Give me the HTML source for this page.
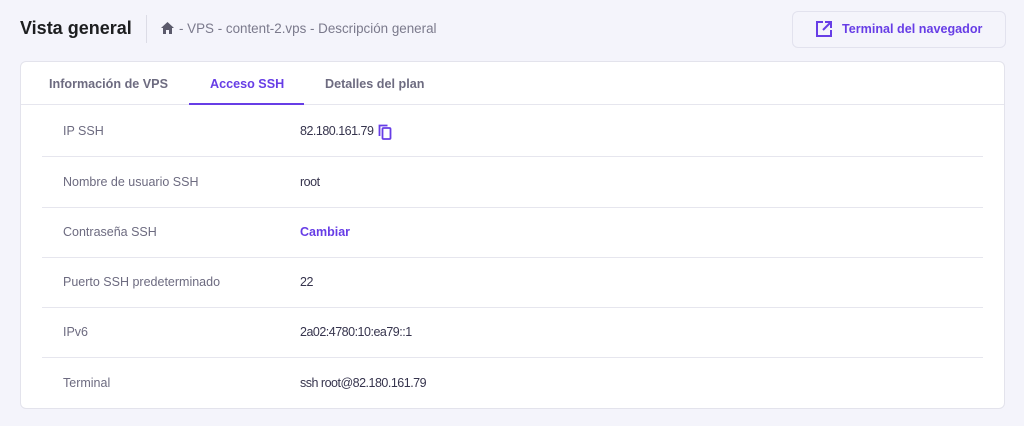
<!DOCTYPE html><html><head><style>
body{margin:0;width:1024px;height:426px;background:#f4f4fb;font-family:"Liberation Sans",sans-serif;position:relative;overflow:hidden}
.t{position:absolute;white-space:nowrap}
.card{position:absolute;left:20px;top:61px;width:983px;height:346px;background:#fff;border:1px solid #e3e3ec;border-radius:6px}
.row{position:absolute;left:21px;width:941px;height:50px;border-bottom:1px solid #e6e6ee;font-size:12.5px;color:#36344d}
.row .l{position:absolute;left:21px;top:18px;color:#6d6b80}
.row .v{position:absolute;left:258px;top:18px;letter-spacing:-0.5px}
</style></head><body>
<div class="t" style="left:20px;top:18px;font-size:18px;font-weight:bold;color:#1d1e20">Vista general</div>
<div style="position:absolute;left:146px;top:15px;width:1px;height:28px;background:#dcdce6"></div>
<svg style="position:absolute;left:160px;top:21px" width="15" height="14" viewBox="0 0 15 14"><path d="M7.5 1 L1 7 H3 V13 H6 V9 H9 V13 H12 V7 H14 Z" fill="#5b5a6b"/></svg>
<div class="t" style="left:179px;top:21px;font-size:13.4px;color:#7b7a8c">- VPS - content-2.vps - Descripción general</div>
<div style="position:absolute;left:792px;top:11px;width:212px;height:35px;border:1px solid #e2e2ee;border-radius:6px;background:#f4f4fb"></div>
<svg style="position:absolute;left:815px;top:20px" width="18" height="18" viewBox="0 0 18 18" fill="none" stroke="#673de6" stroke-width="2"><path d="M8 2H2V16H16V10"/><path d="M10 2H16V8M16 2L8 10"/></svg>
<div class="t" style="left:842px;top:22px;font-size:12.6px;font-weight:bold;color:#673de6">Terminal del navegador</div>
<div class="card">
<div class="t" style="left:28px;top:15px;font-size:12.6px;font-weight:bold;color:#6d6b80">Información de VPS</div>
<div class="t" style="left:189px;top:15px;font-size:12.6px;font-weight:bold;color:#673de6">Acceso SSH</div>
<div class="t" style="left:304px;top:15px;font-size:12.6px;font-weight:bold;color:#6d6b80">Detalles del plan</div>
<div style="position:absolute;left:0;top:42px;width:983px;height:1px;background:#e6e6ee"></div>
<div style="position:absolute;left:168px;top:41px;width:115px;height:2px;background:#673de6"></div>
<div class="row" style="top:44px"><span class="t l">IP SSH</span><span class="t v">82.180.161.79</span>
<svg style="position:absolute;left:336px;top:18px" width="14" height="16" viewBox="0 0 14 16" fill="none" stroke="#673de6" stroke-width="1.8"><rect x="4.5" y="4" width="8" height="11" rx="1"/><path d="M1.5 12V1.5H9.5"/></svg></div>
<div class="row" style="top:95px"><span class="t l">Nombre de usuario SSH</span><span class="t v">root</span></div>
<div class="row" style="top:145px"><span class="t l">Contraseña SSH</span><span class="t v" style="color:#673de6;font-weight:bold;letter-spacing:0">Cambiar</span></div>
<div class="row" style="top:195px"><span class="t l">Puerto SSH predeterminado</span><span class="t v">22</span></div>
<div class="row" style="top:245px"><span class="t l">IPv6</span><span class="t v">2a02:4780:10:ea79::1</span></div>
<div class="row" style="top:296px;border:none"><span class="t l">Terminal</span><span class="t v">ssh root@82.180.161.79</span></div>
</div>
</body></html>
